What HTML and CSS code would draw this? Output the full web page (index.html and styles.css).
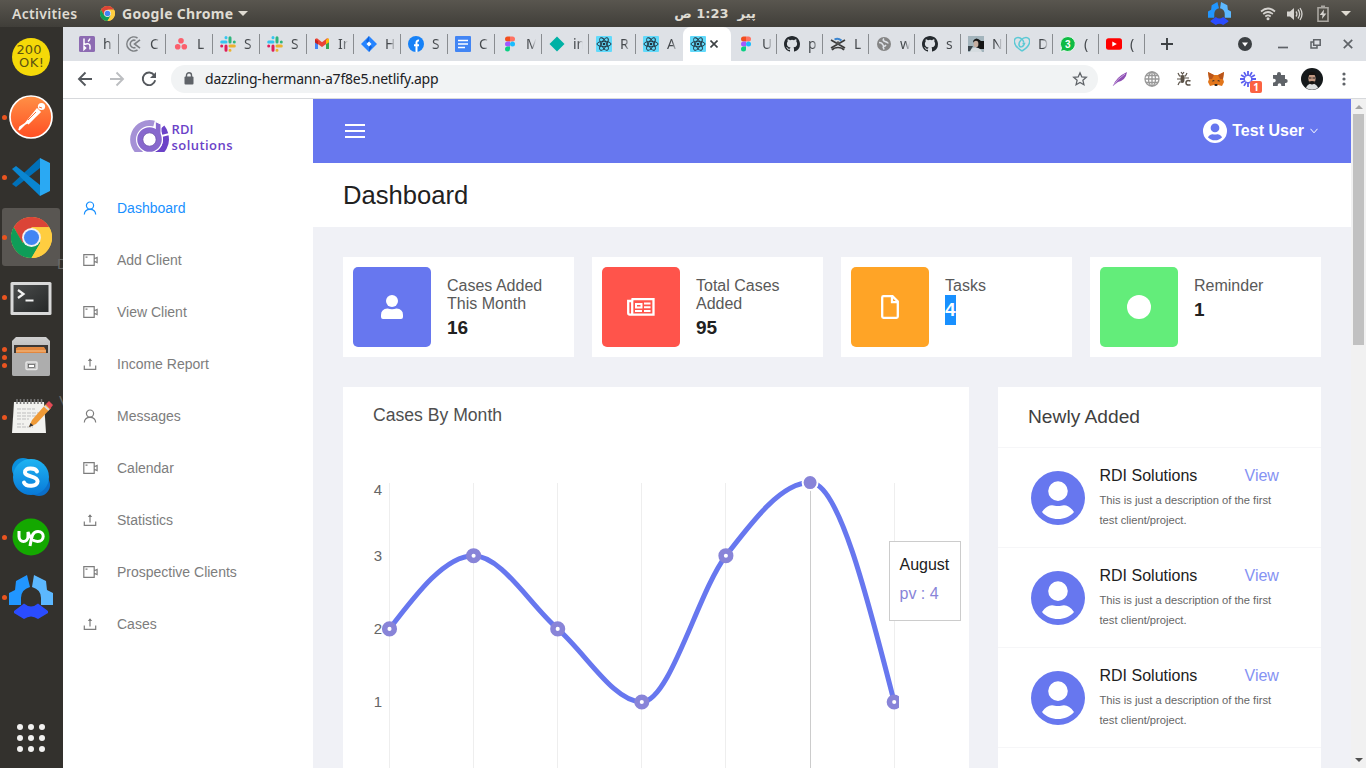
FILE: index.html
```html
<!DOCTYPE html>
<html lang="en">
<head>
<meta charset="utf-8">
<title>Dashboard</title>
<link rel="stylesheet" href="styles.css">
</head>
<body>
<svg class="defs" width="0" height="0" aria-hidden="true">
  <defs>
    <linearGradient id="skypeFill" x1="0" y1="0" x2="0" y2="1"><stop offset="0" stop-color="#1fb4f2"/><stop offset="1" stop-color="#0879d8"/></linearGradient>
    <linearGradient id="orangeFill" x1="0" y1="0" x2="0" y2="1"><stop offset="0" stop-color="#ff9046"/><stop offset="1" stop-color="#ff4f23"/></linearGradient>
    <linearGradient id="greyFill" x1="0" y1="0" x2="0" y2="1"><stop offset="0" stop-color="#d0d0d0"/><stop offset="1" stop-color="#8c8c8c"/></linearGradient>
    <linearGradient id="termFill" x1="0" y1="0" x2="1" y2="1"><stop offset="0" stop-color="#4a4c4c"/><stop offset="1" stop-color="#262828"/></linearGradient>
  </defs>
  <symbol id="chrome" viewBox="0 0 48 48">
    <circle cx="24" cy="24" r="24" fill="#fcd04b"/>
    <path d="M24 24L13 30 3.200 12A24 24 0 0 1 44.800 12H24z" fill="#db4437"/>
    <path d="M3.200 12A24 24 0 0 0 24 48L34.500 30 24 24 13.600 30z" fill="#0f9d58"/>
    <path d="M24 48A24 24 0 0 0 44.800 12H24L34.400 30z" fill="#ffcd40"/>
    <circle cx="24" cy="24" r="11" fill="#f1f1f1"/><circle cx="24" cy="24" r="8.800" fill="#4285f4"/>
  </symbol>
  <symbol id="trihex" viewBox="0 0 44 44">
    <path d="M18 0L21 12Q12 14.500 12 23V30H0V18L6 15 7 6z" fill="#2196ff"/>
    <path d="M25 0L23 12Q32 14.500 32 23V30H44V18L38 15 37 6z" fill="#5cb8ff"/>
    <path d="M5 36L15 28.500Q22 34.500 29 28.500L39 36V38L29 44Q22 39 15 44L5 38z" fill="#2a4cff"/>
  </symbol>
  <symbol id="slack" viewBox="0 0 16 16">
    <g stroke-width="3" stroke-linecap="round" fill="none">
    <path d="M6 1.700V1.600M1.700 6H6" stroke="#36c5f0"/><path d="M10 1.700V6M14.300 6V6" stroke="#2eb67d"/>
    <path d="M10 10H14.300M10 14.300V14.300" stroke="#ecb22e"/><path d="M6 10V14.300M1.700 10V10" stroke="#e01e5a"/></g>
  </symbol>
  <symbol id="figma" viewBox="0 0 16 16">
    <path d="M8 .5H5.500a2.500 2.500 0 0 0 0 5H8z" fill="#f24e1e"/><path d="M8 .5h2.500a2.500 2.500 0 0 1 0 5H8z" fill="#ff7262"/>
    <path d="M8 5.500H5.500a2.500 2.500 0 0 0 0 5H8z" fill="#a259ff"/><circle cx="10.500" cy="8" r="2.500" fill="#1abcfe"/>
    <path d="M8 10.500H5.500a2.500 2.500 0 1 0 2.500 2.500z" fill="#0acf83"/>
  </symbol>
  <symbol id="react" viewBox="0 0 16 16">
    <rect width="16" height="16" rx="1" fill="#61dafb"/><g fill="none" stroke="#20303c" stroke-width=".9"><ellipse cx="8" cy="8" rx="7" ry="2.700"/><ellipse cx="8" cy="8" rx="7" ry="2.700" transform="rotate(60 8 8)"/><ellipse cx="8" cy="8" rx="7" ry="2.700" transform="rotate(120 8 8)"/></g><circle cx="8" cy="8" r="1.300" fill="#20303c"/>
  </symbol>
  <symbol id="github" viewBox="0 0 16 16">
    <path fill="#24292e" d="M8 0C3.580 0 0 3.580 0 8c0 3.540 2.290 6.530 5.470 7.590.4.070.55-.17.55-.38v-1.490c-2.230.48-2.700-.94-2.700-.94-.36-.93-.89-1.180-.89-1.180-.73-.5.050-.49.050-.49.800.06 1.230.83 1.230.83.720 1.220 1.870.87 2.330.66.070-.52.280-.87.510-1.070-1.780-.2-3.640-.89-3.640-3.950 0-.87.310-1.590.82-2.150-.08-.2-.36-1.020.08-2.120 0 0 .67-.21 2.200.82a7.600 7.600 0 0 1 4 0c1.530-1.040 2.200-.82 2.200-.82.440 1.100.16 1.920.08 2.120.51.560.82 1.270.82 2.150 0 3.070-1.870 3.750-3.650 3.950.29.250.54.730.54 1.480v2.200c0 .21.150.46.550.38A8 8 0 0 0 16 8c0-4.420-3.580-8-8-8z"/>
  </symbol>
  <symbol id="person" viewBox="0 0 14 14"><g fill="none" stroke="currentColor" stroke-width="1.200"><circle cx="7" cy="4.600" r="3.600"/><path d="M1.300 13.500C1.500 10.200 3.600 8.300 7 8.300s5.500 1.900 5.700 5.200"/></g></symbol>
  <symbol id="camera" viewBox="0 0 15 14"><g fill="none" stroke="currentColor" stroke-width="1.200"><path d="M.8 1.700h10.400v10.600H.8zM2.500 4.100h2M11.200 5.800l2.900-1.300v5l-2.900-1.300"/></g></symbol>
  <symbol id="upload" viewBox="0 0 14 14"><g fill="none" stroke="currentColor" stroke-width="1.200"><path d="M1.300 8.500v3.900h11.400V8.500M7 9.500V2"/><path d="M4.800 4L7 1.200 9.200 4z" fill="currentColor" stroke="none"/></g></symbol>
  <symbol id="user-circle" viewBox="0 0 54 54"><path fill="currentColor" fill-rule="evenodd" d="M27 0a27 27 0 1 0 0 54 27 27 0 0 0 0-54zM27 10.300a9.800 9.800 0 1 1 0 19.600 9.800 9.800 0 0 1 0-19.600zM11 41c3-4.500 6.500-6.800 10-6.800 2.500 0 3.300.8 6 .8s3.500-.8 6-.8c3.500 0 7 2.300 10 6.800-4 4.700-9.500 7-16 7s-12-2.300-16-7z"/></symbol>
</svg>

<header class="topbar">
  <span class="activities">Activities</span>
  <svg class="app-icon" width="15" height="15"><use href="#chrome"/></svg>
  <span class="app-name">Google Chrome</span>
  <i class="caret"></i>
  <span class="clock" dir="rtl" lang="ur">پیر&nbsp; 1:23 ص</span>
  <div class="tray">
    <svg width="23" height="23"><use href="#trihex"/></svg>
    <svg class="tray-wifi" width="16" height="14" viewBox="0 0 16 14" fill="none" stroke="#d5d3cf" stroke-width="1.700"><path d="M1 4.500Q8-1.500 15 4.500M3.200 7Q8 3 12.800 7M5.300 9.500Q8 7.300 10.700 9.500"/><circle cx="8" cy="11.800" r="1.500" fill="#d5d3cf" stroke="none"/></svg>
    <svg class="tray-sound" width="16" height="14" viewBox="0 0 16 14"><path d="M0 4.500h3L7 1v12L3 9.500H0z" fill="#d5d3cf"/><path d="M9 4.500q1.800 2.500 0 5M11 2.500q3.300 4.500 0 9M13 1q4 6 0 12" fill="none" stroke="#d5d3cf" stroke-width="1.300"/></svg>
    <svg class="tray-battery" width="12" height="17" viewBox="0 0 12 17"><path d="M1 2.700h10v13.500H1zM4 1.200h4" fill="none" stroke="#aaa7a1" stroke-width="1.600"/><path d="M7 4.500L2.700 10h2.800L5 14l4.400-5.500H6.600z" fill="#d5d3cf"/></svg>
    <i class="caret"></i>
  </div>
</header>

<div class="desktop">
<nav class="dock">
  <div class="launcher"><svg width="40" height="40" viewBox="0 0 40 40"><circle cx="20" cy="20" r="19" fill="#f5d908"/><text class="ok-text" x="5.500" y="16.500" textLength="25">200</text><text class="ok-text" x="8" y="30" textLength="25">OK!</text></svg></div>
  <div class="launcher"><i class="dots"></i><svg width="44" height="44" viewBox="0 0 44 44"><circle cx="22" cy="22" r="21" fill="url(#orangeFill)" stroke="#fff" stroke-width="1.700"/><circle cx="32.500" cy="11.500" r="3.600" fill="#fff"/><path d="M28 14l3 3-9 9-6 3zM24 24l-5 5M17 28l-6 4-1 3z" fill="#fff" stroke="#fff" stroke-width="1.500"/><path d="M30 12l3 1M27 17l-8 8" stroke="#ff7038" stroke-width="1"/></svg></div>
  <div class="launcher"><i class="dots"></i><svg width="40" height="40" viewBox="0 0 40 40"><path d="M29 1L1 27l4 3 24-19z" fill="#0070b8"/><path d="M1 12l4-3 24 19v11z" fill="#0a86d1"/><path d="M29 1l10 5v28l-10 5z" fill="#2aa9f3"/></svg></div>
  <div class="launcher active"><i class="dots"></i><svg width="41" height="41"><use href="#chrome"/></svg></div>
  <div class="launcher"><i class="dots"></i><svg width="42" height="40" viewBox="0 0 42 40"><rect x=".5" y="5" width="41" height="33" rx="1.500" fill="#d9d9d9"/><rect x="3.500" y="8" width="35" height="27" fill="url(#termFill)"/><path d="M8 13l5.500 4L8 21M15.500 23.500h8" fill="none" stroke="#f2f2f2" stroke-width="2.200"/></svg></div>
  <div class="launcher"><i class="dots three"></i><svg width="40" height="40" viewBox="0 0 40 40"><path d="M5 0h30l4 4v33q0 2-2 2H3q-2 0-2-2V4z" fill="url(#greyFill)"/><path d="M3 8h34v9H3z" fill="#3c3835"/><path d="M5 11l2-1h26l2 3v4H5z" fill="#e2873e"/><path d="M5 14h30" stroke="#f6c18a" stroke-width="1"/><path d="M1 16h38v21q0 2-2 2H3q-2 0-2-2z" fill="#adadad"/><rect x="15" y="25" width="11" height="7.500" rx="1" fill="#b9b9b9" stroke="#e6e6e6" stroke-width="1.500"/><rect x="17.500" y="27.500" width="6" height="3" fill="#fff" stroke="#555" stroke-width=".7"/></svg></div>
  <div class="launcher"><i class="dots"></i><svg width="44" height="40" viewBox="0 0 44 40"><path d="M5 5h30l2 31H3z" fill="#f2f2ef"/><path d="M8 2v5M11.500 2v5M15 2v5M18.500 2v5M22 2v5M25.500 2v5M29 2v5M32.500 2v5" stroke="#777" stroke-width="1.500"/><path d="M8 12h18M8 16h24M8 19h20M8 22h12M8 27h7M8 30h16" stroke="#bdbdbd" stroke-width="1" stroke-dasharray="4 1"/><path d="M20 30l3-7L37 7l5 4-15 16z" fill="#ef9a36"/><path d="M20 30l1.500-4 3 2.500z" fill="#333"/><path d="M37 7l3-3 4 4-3 4z" fill="#e34b57"/><path d="M35.500 9l4.500 4" stroke="#ddd" stroke-width="2"/></svg></div>
  <div class="launcher"><svg width="40" height="40" viewBox="0 0 40 40"><circle cx="12" cy="12" r="11" fill="#0a8fdd"/><circle cx="28" cy="28" r="11" fill="#0b6fca"/><circle cx="20" cy="20" r="18" fill="url(#skypeFill)"/><path d="M26 14.500C24.500 10.500 13.500 10 14 15.500c.4 4.800 12.400 3 12.600 8.800C26.700 30 15 30.300 13 25.500" fill="none" stroke="#fff" stroke-width="4" stroke-linecap="round"/></svg></div>
  <div class="launcher"><i class="dots"></i><svg width="38" height="38" viewBox="0 0 38 38"><circle cx="19" cy="19" r="18.500" fill="#14a800"/><path d="M7 13v5.500c0 6.500 9 6.500 9 0V14c1.500 5 5 9.500 9.500 9.500 7.500 0 7.500-10 .5-10-5.500 0-6 4-8 14.500" fill="none" stroke="#fff" stroke-width="3"/></svg></div>
  <div class="launcher"><i class="dots"></i><svg width="44" height="44"><use href="#trihex"/></svg></div>
  <div class="app-grid"><i></i><i></i><i></i><i></i><i></i><i></i><i></i><i></i><i></i></div>
  <span class="desk-label first">D</span>
  <span class="desk-label second">V</span>
</nav>

<div class="browser">
  <div class="tabs">
    <div class="tab"><svg viewBox="0 0 16 16"><rect width="16" height="16" rx="1.500" fill="#8d6bb2"/><path d="M5 2.500V8.500Q11 6.500 11 10v3.500M5 10.500v3l1.600-1.500zM9 5.500q1.600-1.200 1.800-3" fill="none" stroke="#fff" stroke-width="1.500"/></svg><span>h</span></div>
    <div class="tab"><svg viewBox="0 0 16 16"><path d="M11.500 2A7 7 0 1 0 11.500 14M14 3.800L8.500 8l5.500 4.200M9.500 4.500A3.800 3.800 0 1 0 9.500 11.500" fill="none" stroke="#7d8084" stroke-width="1.600"/></svg><span>C</span></div>
    <div class="tab"><svg viewBox="0 0 16 16"><g fill="#fb5f6c"><circle cx="8" cy="4.800" r="2.800"/><circle cx="4.700" cy="10.800" r="2.800"/><circle cx="11.300" cy="10.800" r="2.800"/></g></svg><span>L</span></div>
    <div class="tab"><svg><use href="#slack"/></svg><span>S</span></div>
    <div class="tab"><svg><use href="#slack"/></svg><span>S</span></div>
    <div class="tab"><svg viewBox="0 0 16 16"><path d="M1 3v10h3V6z" fill="#4285f4"/><path d="M15 3v10h-3V6z" fill="#34a853"/><path d="M1 3l2-.7L8 6.300l5-4 2 .7v3l-7 5-7-5z" fill="#ea4335"/><path d="M12 4l2-1.700 1 1v3l-3 2z" fill="#fbbc04"/><path d="M1 3.500v3L4 8.500V5z" fill="#c5221f"/></svg><span>In</span></div>
    <div class="tab"><svg viewBox="0 0 16 16"><path d="M8 0l8 8-8 8-8-8z" fill="#2684ff"/><path d="M8 0l-3 5 3 3V16l3-5-3-3z" fill="#1262d8"/><path d="M8 5.500L10.500 8 8 10.500 5.500 8z" fill="#fff"/></svg><span>H</span></div>
    <div class="tab"><svg viewBox="0 0 16 16"><circle cx="8" cy="8" r="8" fill="#1681f7"/><path d="M8.500 16V8.500M6 9.300h5M8.500 9V6.500Q8.500 4.300 11 4.600" fill="none" stroke="#fff" stroke-width="2"/></svg><span>S</span></div>
    <div class="tab"><svg viewBox="0 0 16 16"><rect width="16" height="16" rx="1" fill="#4285f4"/><path d="M3 4.500h10M3 8h10M3 11.500h7" stroke="#fff" stroke-width="1.600"/></svg><span>C</span></div>
    <div class="tab"><svg><use href="#figma"/></svg><span>M</span></div>
    <div class="tab"><svg viewBox="0 0 16 16"><path d="M8 .5L15.500 8 8 15.500.5 8z" fill="#00b1a5"/></svg><span>in</span></div>
    <div class="tab"><svg><use href="#react"/></svg><span>R</span></div>
    <div class="tab last-before"><svg><use href="#react"/></svg><span>A</span></div>
    <div class="tab current"><svg><use href="#react"/></svg><svg class="close" viewBox="0 0 8 8"><path d="M.5.500l7 7M7.500.500l-7 7" stroke="#3c4043" stroke-width="1.600"/></svg></div>
    <div class="tab narrow"><svg><use href="#figma"/></svg><span>U</span></div>
    <div class="tab narrow"><svg><use href="#github"/></svg><span>p</span></div>
    <div class="tab narrow"><svg viewBox="0 0 16 16"><path d="M1 4l14 8M15 4L1 12M2 14q2-2.500 6-2.500t6 2.500" fill="none" stroke="#3a3a3a" stroke-width="1.700"/><path d="M4.500 3.500q3.500-2 7 1" fill="none" stroke="#3b85cf" stroke-width="2"/><circle cx="8" cy="7" r="1.800" fill="#555"/></svg><span>L</span></div>
    <div class="tab narrow"><svg viewBox="0 0 16 16"><circle cx="8" cy="8" r="7" fill="#858585"/><path d="M3 6.500q3 0 4 2.500t3 0M8 2.500q-2 2 1 3t3 2M7 10.500l1 3" fill="none" stroke="#dee1e6" stroke-width="1.600"/></svg><span>w</span></div>
    <div class="tab narrow"><svg><use href="#github"/></svg><span>s</span></div>
    <div class="tab narrow"><svg viewBox="0 0 16 16"><rect width="16" height="16" fill="#a3b4bc"/><path d="M5 5q3-5 8 0h3v8H9z" fill="#161616"/><ellipse cx="8" cy="8" rx="2.400" ry="3.300" fill="#c5aea0"/><path d="M2 16q1-5 6-4.500t6 4.500z" fill="#d6dce0"/><path d="M0 10h5l-3 5H0z" fill="#39434a"/></svg><span>N</span></div>
    <div class="tab narrow"><svg viewBox="0 0 16 16"><path d="M8 15C-2 9-1 1.500 4 1.500c3 0 6 3 5.500 5M8 15c10-6 9-13.500 4-13.500-3.500 0-7.500 4-7 7.500.5 2.500 4 3 5.500-1.500H8.500" fill="none" stroke="#5cc9d5" stroke-width="1.500"/></svg><span>D</span></div>
    <div class="tab narrow"><svg viewBox="0 0 16 16"><path d="M8 .5a7.500 7.500 0 1 1-4 14L.5 15.500l1-3.500A7.500 7.500 0 0 1 8 .5z" fill="#10bb45" stroke="#fff" stroke-width=".8"/><text class="fav-text" x="5" y="11.800">3</text></svg><span>(</span></div>
    <div class="tab narrow"><svg viewBox="0 0 16 16"><rect y="2.300" width="16" height="11.500" rx="2.500" fill="#f00"/><path d="M6.300 5.500l4.500 2.500-4.500 2.500z" fill="#fff"/></svg><span>(</span></div>
    <div class="window-tools">
      <svg width="14" height="14" viewBox="0 0 14 14"><path d="M7 1v12M1 7h12" stroke="#3c4043" stroke-width="1.900"/></svg>
      <svg class="tab-search" width="14" height="14" viewBox="0 0 14 14"><circle cx="7" cy="7" r="7" fill="#3c4043"/><path d="M4 5.500h6L7 9.500z" fill="#fff"/></svg>
      <svg class="minimize" width="10" height="14" viewBox="0 0 10 14"><path d="M0 10.500h10" stroke="#5f6368" stroke-width="1.700"/></svg>
      <svg class="restore" width="11" height="12" viewBox="0 0 11 12"><path d="M3.700 1.700h6.500v5.500H3.700zM3 4H1v6h6V8" fill="none" stroke="#5f6368" stroke-width="1.500"/></svg>
      <svg class="window-close" width="10" height="10" viewBox="0 0 10 10"><path d="M.8.800l8.400 8.400M9.200.800L.8 9.200" stroke="#5f6368" stroke-width="1.700"/></svg>
    </div>
  </div>

  <div class="toolbar">
    <div class="tool"><svg width="16" height="16" viewBox="0 0 16 16"><path d="M15 8H2M8.500 1.500L2 8l6.500 6.500" fill="none" stroke="#54585d" stroke-width="1.900"/></svg></div>
    <div class="tool"><svg width="16" height="16" viewBox="0 0 16 16"><path d="M1 8h13M7.500 1.500L14 8l-6.500 6.500" fill="none" stroke="#bcbec1" stroke-width="1.900"/></svg></div>
    <div class="tool"><svg width="16" height="16" viewBox="0 0 16 16"><path d="M13.300 4.300A6.300 6.300 0 1 0 14.200 9.300" fill="none" stroke="#54585d" stroke-width="1.900"/><path d="M15 1v6H9z" fill="#54585d"/></svg></div>
    <div class="omnibox">
      <svg width="10" height="13" viewBox="0 0 10 13"><rect x=".5" y="4.500" width="9" height="8" rx="1" fill="#5f6368"/><path d="M2.500 5V3.300a2.500 2.500 0 0 1 5 0V5" fill="none" stroke="#5f6368" stroke-width="1.400"/></svg>
      <span>dazzling-hermann-a7f8e5.netlify.app</span>
      <svg class="star" width="16" height="16" viewBox="0 0 16 16"><path d="M8 1.800l1.800 4.100 4.500.4-3.400 3 1 4.400L8 11.400l-3.900 2.300 1-4.400-3.400-3 4.500-.4z" fill="none" stroke="#5f6368" stroke-width="1.300"/></svg>
    </div>
    <div class="tool ext"><svg width="16" height="16" viewBox="0 0 16 16"><path d="M1 15Q4 6 15 1q-1 8-9 10" fill="#8e4fb5"/><path d="M1 15Q5 8 13 3" stroke="#c8a4dc" fill="none"/></svg></div>
    <div class="tool"><svg width="16" height="16" viewBox="0 0 16 16" fill="none" stroke="#999" stroke-width="1.300"><circle cx="8" cy="8" r="7"/><ellipse cx="8" cy="8" rx="3.500" ry="7"/><path d="M1 8h14M8 1v14M2 4.500h12M2 11.500h12"/></svg></div>
    <div class="tool"><svg width="16" height="16" viewBox="0 0 16 16"><ellipse cx="6.500" cy="8" rx="2" ry="4" fill="#5b5248"/><path d="M2 2l1.500 3H6M11 2L9.500 5H7M1 8h5M7 7h6M2 14l1.500-3H6M5 1l1.500 2L8 1" fill="none" stroke="#5b5248" stroke-width="1.200"/><path d="M14.500 10q-4.500-1.500-4.500 1.700t4.500 2" fill="none" stroke="#5b5248" stroke-width="1.600"/></svg></div>
    <div class="tool"><svg width="16" height="16" viewBox="0 0 16 16"><path d="M0 1l6 3h4l6-3-1 7 1 3-2 4-4-1-1 1H7l-1-1-4 1-2-4 1-3z" fill="#e2761b"/><path d="M0 1l6 3-2 4H1zM16 1l-6 3 2 4h3z" fill="#b9551b"/><path d="M5 9l2 1-3 .5zM11 9l-2 1 3 .5zM6.500 13h3L9 15H7z" fill="#2b2b2b"/></svg></div>
    <div class="tool burst"><svg width="16" height="16" viewBox="0 0 16 16" stroke="#5b5ff0" stroke-width="1.800"><path d="M8 0v5M8 11v5M0 8h5M11 8h5M4 1.100l2.500 4.300M9.500 10.600l2.500 4.300M12 1.100L9.500 5.400M6.500 10.600L4 14.900M1.100 4l4.300 2.500M10.600 9.500l4.300 2.500M1.100 12l4.300-2.500M10.600 6.500L14.900 4"/></svg><b class="badge">1</b></div>
    <div class="tool"><svg width="16" height="16" viewBox="0 0 16 16"><path d="M1 4h4V3a2 2 0 0 1 4 0v1h4v4h.7a2 2 0 0 1 0 4H13v3H9.300v-1a1.800 1.800 0 0 0-3.600 0v1H1v-3.600h1a1.800 1.800 0 0 0 0-3.600H1z" fill="#5f6368"/></svg></div>
    <div class="tool"><svg width="22" height="22" viewBox="0 0 22 22"><circle cx="11" cy="11" r="11" fill="#15191b"/><path d="M5 20q1.500-4.500 6-4.500t6 4.500q-6 3.500-12 0z" fill="#dcdfe0"/><ellipse cx="11" cy="10.500" rx="3.600" ry="5.300" fill="#c39a84"/><path d="M6.800 9Q6 4 11 4t4.200 5l-1-2H7.800zM8 13.500q3-1 6 0-.5 3-3 3t-3-3z" fill="#161412"/><path d="M8 10h2.500M11.500 10H14" stroke="#222"/></svg></div>
    <div class="tool"><svg width="4" height="16" viewBox="0 0 4 16" fill="#5f6368"><circle cx="2" cy="3" r="1.600"/><circle cx="2" cy="8" r="1.600"/><circle cx="2" cy="13" r="1.600"/></svg></div>
  </div>

  <div class="viewport">
    <aside class="sidebar">
      <div class="logo">
        <svg width="106" height="34" viewBox="0 0 106 34">
          <defs><clipPath id="markClip"><rect width="42" height="33"/></clipPath></defs>
          <g clip-path="url(#markClip)" fill="none">
            <path d="M12.500 34.500A16.200 16.200 0 0 1 25 4.900" stroke="#a591d6" stroke-width="6.600"/>
            <path d="M36.600 17A16.200 16.200 0 0 1 26 35.800M33 8.500A16.200 16.200 0 0 1 36.300 15" stroke="#6b42c8" stroke-width="6"/>
            <circle cx="20.500" cy="20.500" r="9.600" stroke="#fff" stroke-width="7.800"/>
            <path d="M26.300 2.500L32 5.200V21H26.300z" fill="#8768cd" stroke="#fff" stroke-width="1"/>
            <circle cx="20.500" cy="20.500" r="9.500" stroke="#8768cd" stroke-width="5.600"/>
            <circle cx="20.500" cy="20.500" r="6.700" stroke="#6c50ab" stroke-width=".8"/>
          </g>
          <text class="logo-text" x="42.500" y="14.500" textLength="22">RDI</text>
          <text class="logo-text" x="42.500" y="30.500" textLength="61">solutions</text>
        </svg>
      </div>
      <ul class="menu">
        <li class="selected"><svg width="14" height="14"><use href="#person"/></svg>Dashboard</li>
        <li><svg class="cam" width="15" height="14"><use href="#camera"/></svg>Add Client</li>
        <li><svg class="cam" width="15" height="14"><use href="#camera"/></svg>View Client</li>
        <li><svg width="14" height="14"><use href="#upload"/></svg>Income Report</li>
        <li><svg width="14" height="14"><use href="#person"/></svg>Messages</li>
        <li><svg class="cam" width="15" height="14"><use href="#camera"/></svg>Calendar</li>
        <li><svg width="14" height="14"><use href="#upload"/></svg>Statistics</li>
        <li><svg class="cam" width="15" height="14"><use href="#camera"/></svg>Prospective Clients</li>
        <li><svg width="14" height="14"><use href="#upload"/></svg>Cases</li>
      </ul>
    </aside>

    <main class="main">
      <div class="navbar">
        <svg width="20" height="14" viewBox="0 0 20 14"><path d="M0 1h20M0 7h20M0 13h20" stroke="#fff" stroke-width="2"/></svg>
        <div class="account"><svg width="24" height="24"><use href="#user-circle"/></svg><b>Test User</b><svg class="chev" width="8" height="6" viewBox="0 0 8 6"><path d="M.5.800L4 4.800 7.500.800" fill="none" stroke="#fff" stroke-width="1"/></svg></div>
      </div>
      <h1 class="page-title">Dashboard</h1>
      <section class="stats">
        <div class="stat"><div class="stat-icon blue"><svg width="22" height="24" viewBox="0 0 22 24" fill="#fff"><circle cx="11" cy="6" r="6"/><path d="M6.500 13.500q4.500 1.600 9 0Q22 14 22 20v2q0 2-2 2H2q-2 0-2-2v-2q0-6 6.500-6.500z"/></svg></div><div class="stat-body"><p>Cases Added This Month</p><strong>16</strong></div></div>
        <div class="stat"><div class="stat-icon red"><svg width="28" height="18" viewBox="0 0 28 18"><path d="M5.500 1.200h21v15.500H2.800q-1.600 0-1.600-1.600V3h4zM5.200 3v12q0 1.700-2 1.700" fill="none" stroke="#fff" stroke-width="2.300"/><path d="M9 6h5.500v3.500H9zM8 13h7M17 5.500h6.500M17 9.200h6.500M17 13h6.500" fill="none" stroke="#fff" stroke-width="2"/></svg></div><div class="stat-body"><p>Total Cases Added</p><strong>95</strong></div></div>
        <div class="stat"><div class="stat-icon orange"><svg width="18" height="24" viewBox="0 0 18 24"><path d="M2.500 1.200h9L16.800 6.500v15q0 1.300-1.300 1.300h-13q-1.300 0-1.300-1.300v-19q0-1.300 1.300-1.300zM11 1.500v5.700h5.500" fill="none" stroke="#fff" stroke-width="2.300"/></svg></div><div class="stat-body"><p>Tasks</p><strong class="marked">4</strong></div></div>
        <div class="stat"><div class="stat-icon green"><i class="disc"></i></div><div class="stat-body"><p>Reminder</p><strong>1</strong></div></div>
      </section>
      <section class="panels">
        <div class="chart-card">
          <h2>Cases By Month</h2>
          <svg class="chart" width="616" height="340" viewBox="353 430 616 340">
            <defs><clipPath id="plot"><rect x="380" y="470" width="519" height="300"/></clipPath></defs>
            <path d="M389.500 483V770M473.500 483V770M557.500 483V770M641.500 483V770M725.500 483V770M894.500 483V770" stroke="#eee"/>
            <path d="M810.500 483V770" stroke="#ccc"/>
            <g class="ticks"><text x="382" y="495">4</text><text x="382" y="561">3</text><text x="382" y="634">2</text><text x="382" y="707">1</text></g>
            <g clip-path="url(#plot)">
              <path d="M389.500 628.900C417.500 592.300 445.600 555.700 473.600 555.700C501.600 555.700 529.700 604.500 557.700 628.900C585.700 653.300 613.800 702 641.800 702C669.900 702 697.900 592.300 725.900 555.700C754 519.100 782 482.600 810.100 482.600C838.100 482.600 866.200 592.200 894.200 702" fill="none" stroke="#6777ef" stroke-width="5"/>
              <g fill="#fff" stroke="#8884d8" stroke-width="5.500"><circle cx="389.500" cy="628.900" r="4.800"/><circle cx="473.600" cy="555.700" r="4.800"/><circle cx="557.700" cy="628.900" r="4.800"/><circle cx="641.800" cy="702" r="4.800"/><circle cx="725.900" cy="555.700" r="4.800"/><circle cx="894.200" cy="702" r="4.800"/></g>
              <circle cx="810.100" cy="482.600" r="7.500" fill="#8884d8" stroke="#fff" stroke-width="2"/>
            </g>
          </svg>
          <div class="tooltip"><p>August</p><p class="value">pv : 4</p></div>
        </div>
        <div class="recent-card">
          <h3>Newly Added</h3>
          <article class="client"><svg width="54" height="54"><use href="#user-circle"/></svg><div><div class="client-head"><span>RDI Solutions</span><a>View</a></div><p>This is just a description of the first test client/project.</p></div></article>
          <article class="client"><svg width="54" height="54"><use href="#user-circle"/></svg><div><div class="client-head"><span>RDI Solutions</span><a>View</a></div><p>This is just a description of the first test client/project.</p></div></article>
          <article class="client"><svg width="54" height="54"><use href="#user-circle"/></svg><div><div class="client-head"><span>RDI Solutions</span><a>View</a></div><p>This is just a description of the first test client/project.</p></div></article>
        </div>
      </section>
    </main>
    <div class="scrollbar"><i class="arrow up"></i><i class="thumb"></i><i class="arrow down"></i></div>
  </div>
</div>
</div>
</body>
</html>
```
FILE: styles.css
```css
* { box-sizing: border-box; }
body { margin: 0; width: 1366px; height: 768px; overflow: hidden; font-family: "Liberation Sans", Arial, sans-serif; }
p, h1, h2, h3, ul { margin: 0; padding: 0; font-weight: 400; }
svg { display: block; flex: none; }
.defs { position: absolute; }

/* desktop bar */
.topbar { position: relative; display: flex; align-items: center; height: 27px; padding-left: 12px; background: linear-gradient(#59564f, #403e39); color: #dfdbd2; font: 700 14px/26px "Noto Sans", sans-serif; }
.activities { width: 88px; font-weight: 600; letter-spacing: .3px; }
.app-name { margin: 0 5px 0 7px; width: 111px; white-space: nowrap; letter-spacing: .3px; }
.caret { width: 0; height: 0; border: 5px solid transparent; border-top-color: #dfdbd2; border-bottom: 0; }
.clock { position: absolute; left: 615px; width: 200px; text-align: center; top: 1px; font-size: 13px; font-family: "DejaVu Sans", sans-serif; letter-spacing: -.4px; }
.tray { display: flex; align-items: center; margin-left: auto; padding-right: 15px; }
.tray-wifi { margin-left: 29px; }
.tray-sound { margin-left: 11px; }
.tray-battery { margin: 0 12px 0 14px; }

/* launcher column */
.desktop { display: flex; height: 741px; }
.dock { position: relative; flex: none; width: 63px; background: #33312d; overflow: hidden; }
.launcher { position: relative; display: flex; align-items: center; justify-content: center; height: 60px; width: 62px; }
.launcher.active::before { content: ""; position: absolute; left: 2px; top: 1px; width: 58px; height: 58px; border-radius: 3px; background: #595652; }
.launcher svg { position: relative; }
.dots { position: absolute; left: 2px; top: 28px; width: 5px; height: 5px; border-radius: 50%; background: #e95420; z-index: 1; }
.dots.three { box-shadow: 0 -8px #e95420, 0 8px #e95420; }
.ok-text { font: 13px "DejaVu Sans", sans-serif; fill: #5e5410; }
.app-grid { display: grid; grid-template-columns: repeat(3, 6px); gap: 5px; margin: 97px 0 0 17px; }
.app-grid i { width: 6px; height: 6px; border-radius: 50%; background: #f2f1f0; }
.desk-label { position: absolute; font-size: 15px; color: #686866; line-height: 16px; }
.desk-label.first { left: 57px; top: 229px; }
.desk-label.second { left: 59px; top: 366px; }

/* browser chrome */
.browser { flex: 1; display: flex; flex-direction: column; min-width: 0; font-family: "Noto Sans", sans-serif; }
.tabs { display: flex; align-items: center; height: 34px; padding-left: 9px; background: #dee1e6; }
.tab { display: flex; align-items: center; flex: none; width: 47px; height: 20px; padding-left: 7px; border-right: 1px solid #898c90; color: #45494d; font-size: 14px; }
.tab svg { width: 16px; height: 16px; }
.tab span { margin-left: 8px; width: 10px; overflow: hidden; white-space: nowrap; line-height: 20px; -webkit-mask-image: linear-gradient(90deg, #000 50%, transparent); mask-image: linear-gradient(90deg, #000 50%, transparent); }
.tab.narrow { width: 46px; }
.tab.last-before { border-color: transparent; }
.tab.current { width: 48px; height: 34px; border: 0; border-radius: 8px 8px 0 0; background: #fff; }
.tab.current .close { width: 8px; height: 8px; margin-left: 4px; }
.window-tools { display: flex; align-items: center; padding-left: 15px; }
.tab-search { margin-left: 64px; }
.minimize { margin-left: 26px; }
.restore { margin-left: 22px; }
.window-close { margin-left: 22px; }
.toolbar { display: flex; align-items: center; height: 38px; padding: 0 0 2px 6px; background: #fff; border-bottom: 1px solid #d7d9dc; }
.tool { display: flex; align-items: center; justify-content: center; width: 32px; flex: none; }
.tool.ext { margin-left: 6px; }
.burst { position: relative; }
.badge { position: absolute; left: 18px; top: 10px; width: 12px; height: 12px; border-radius: 2px; background: #fb6241; color: #fff; font-size: 10px; line-height: 12px; text-align: center; }
.omnibox { display: flex; align-items: center; flex: none; width: 927px; height: 28px; margin-left: 6px; padding: 0 10px 0 13px; border-radius: 14px; background: #f1f3f4; color: #202124; font: 14px/28px "Noto Sans", sans-serif; }
.omnibox span { margin-left: 11px; letter-spacing: -.22px; }
.star { margin-left: auto; }
.fav-text { font: 700 10px "Liberation Sans", sans-serif; fill: #fff; }

/* application */
.viewport { display: flex; flex: 1; min-height: 0; overflow: hidden; font-family: "Liberation Sans", Arial, sans-serif; }
.sidebar { width: 250px; flex: none; background: #fff; }
.logo { padding: 20px 0 0 66px; height: 83px; }
.logo-text { font: 600 13px "Open Sans", sans-serif; fill: #6b42c8; }
.menu { list-style: none; }
.menu li { display: flex; align-items: center; height: 52px; padding-left: 20px; font-size: 14px; color: #7d7d7d; }
.menu svg { margin-right: 20px; }
.menu .cam { margin-right: 19px; }
.menu .selected { color: #1890ff; }
.main { width: 1038px; flex: none; background: #f0f1f6; }
.navbar { display: flex; align-items: center; justify-content: space-between; height: 64px; padding: 0 33px 0 32px; background: #6777ef; color: #fff; }
.account { display: flex; align-items: center; font-size: 16px; }
.account b { margin: 0 6px 0 5px; }
.page-title { height: 64px; padding-left: 30px; background: #fff; color: #212121; font-size: 25.600px; line-height: 64px; }
.stats { display: grid; grid-template-columns: repeat(4, 231px); gap: 18px; padding: 30px 30px 0; }
.stat { display: flex; height: 100px; padding: 10px; background: #fff; }
.stat-icon { display: flex; align-items: center; justify-content: center; flex: none; width: 78px; height: 80px; border-radius: 5px; }
.blue { background: #6777ef; }
.red { background: #ff544b; }
.orange { background: #ffa426; }
.green { background: #63ed7a; }
.disc { width: 24px; height: 24px; border-radius: 50%; background: #fff; }
.stat-body { padding: 10px 0 0 16px; width: 120px; }
.stat-body p { font-size: 16px; line-height: 18px; color: #595959; }
.stat-body strong { display: inline-block; font-size: 19px; line-height: 30px; color: #212121; }
.stat-body .marked { background: #1890ff; color: #fff; }
.panels { display: flex; justify-content: space-between; padding: 30px 30px 0; }
.chart-card { position: relative; width: 626px; height: 420px; background: #fff; }
.chart-card h2 { height: 43px; padding: 18px 0 0 30px; color: #4f4f4f; font-size: 17.600px; line-height: 20px; }
.chart { margin-left: 10px; }
.ticks { font-size: 15px; fill: #666; text-anchor: end; }
.tooltip { position: absolute; left: 546px; top: 154px; width: 72px; height: 80px; padding: 8px 9.500px; border: 1px solid #ccc; background: #fff; color: #212121; font-size: 16px; line-height: 29px; }
.tooltip .value { color: #8884d8; }
.recent-card { width: 323px; height: 420px; background: #fff; }
.recent-card h3 { height: 61px; padding-left: 30px; border-bottom: 1px solid #f6f6f8; color: #3f3f3f; font-size: 19.200px; line-height: 59px; }
.client { display: flex; height: 100px; padding: 17px 0 0 33px; border-bottom: 1px solid #f6f6f8; color: #6777ef; }
.client > svg { margin: 6px 14.500px 0 0; }
.client-head { display: flex; justify-content: space-between; width: 179.400px; font-size: 16px; line-height: 22px; }
.client-head span { color: #212121; }
.client-head a { color: #8592f3; }
.client p { width: 190px; margin-top: 3px; font-size: 11.200px; line-height: 20px; color: #666; }
.scrollbar { display: flex; flex-direction: column; align-items: center; width: 15px; background: #f1f1f1; }
.thumb { width: 11px; height: 231px; margin-top: 5px; background: #c1c1c1; }
.arrow { width: 0; height: 0; border: 4px solid transparent; }
.arrow.up { border-top: 0; border-bottom-color: #a3a3a3; margin-top: 6px; }
.arrow.down { border-bottom: 0; border-top-color: #505050; margin: auto 0 6px; }
```
